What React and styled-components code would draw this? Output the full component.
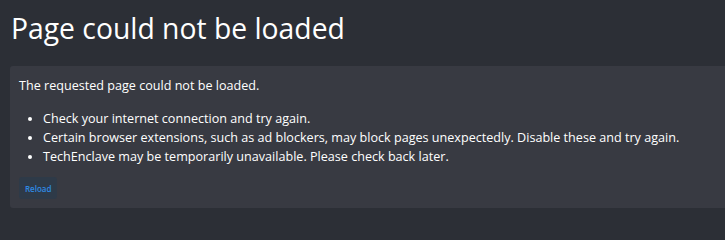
import React from 'react';
import styled, { createGlobalStyle } from 'styled-components';

const GlobalStyle = createGlobalStyle`
  html, body {
    margin: 0;
    padding: 0;
    background: #2c2f36;
  }
  body {
    font-family: "Open Sans", "Noto Sans", sans-serif;
    color: #ffffff;
  }
`;

const Page = styled.div`
  padding: 8px 0 10px 10px;
  height: 218px;
  box-sizing: border-box;
  overflow: hidden;
`;

const Title = styled.h1`
  margin: 0 0 0 1px;
  font-size: 28.3px;
  font-weight: 400;
  line-height: 40px;
`;

const Panel = styled.section`
  margin-top: 18px;
  background: #383a42;
  border-radius: 3px 0 0 3px;
  padding: 11px 9px 9px 9px;
`;

const Lead = styled.p`
  margin: 0 0 15px;
  font-size: 12.6px;
  line-height: 17px;
`;

const List = styled.ul`
  margin: 0 0 11px;
  padding-left: 24px;
  font-size: 12.6px;
  line-height: 19px;
`;

const Item = styled.li``;

const Button = styled.button`
  display: block;
  font-family: inherit;
  font-size: 8px;
  font-weight: 600;
  color: #2f8ae4;
  background: #2e3a48;
  border: 0;
  border-radius: 3px;
  padding: 0 6px;
  height: 22px;
  cursor: pointer;
`;

const items = [
  'Check your internet connection and try again.',
  'Certain browser extensions, such as ad blockers, may block pages unexpectedly. Disable these and try again.',
  'TechEnclave may be temporarily unavailable. Please check back later.',
];

export default function App() {
  return (
    <>
      <GlobalStyle />
      <Page>
        <Title>Page could not be loaded</Title>
        <Panel>
          <Lead>The requested page could not be loaded.</Lead>
          <List>
            {items.map(text => (
              <Item key={text}>{text}</Item>
            ))}
          </List>
          <Button>Reload</Button>
        </Panel>
      </Page>
    </>
  );
}
